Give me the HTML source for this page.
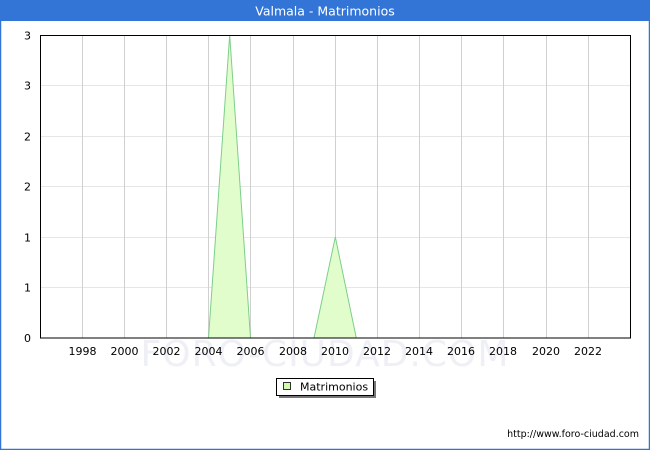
<!DOCTYPE html>
<html><head><meta charset="utf-8"><style>
html,body{margin:0;padding:0;background:#fff;}
svg{display:block;font-family:"DejaVu Sans","Liberation Sans",sans-serif;}
</style></head><body>
<svg width="650" height="450" viewBox="0 0 650 450" xmlns="http://www.w3.org/2000/svg">
<rect x="0" y="0" width="650" height="450" fill="#fff"/>
<rect x="0.5" y="0.5" width="649" height="449" fill="none" stroke="#3375d6" stroke-width="1.5"/>
<rect x="0" y="0" width="650" height="21" fill="#3375d6"/>
<text x="325" y="15.5" fill="#fff" font-size="12.5" text-anchor="middle">Valmala - Matrimonios</text>
<text x="325" y="366" fill="#eef0f6" font-size="36" text-anchor="middle" letter-spacing="1">FORO-CIUDAD.COM</text>
<g stroke="#d0d0d0" stroke-width="1">
<line x1="40" y1="85.5" x2="631" y2="85.5" stroke="#e6e6e6"/>
<line x1="40" y1="136.5" x2="631" y2="136.5" stroke="#e6e6e6"/>
<line x1="40" y1="186.5" x2="631" y2="186.5" stroke="#e6e6e6"/>
<line x1="40" y1="237.5" x2="631" y2="237.5" stroke="#e6e6e6"/>
<line x1="40" y1="287.5" x2="631" y2="287.5" stroke="#e6e6e6"/>
<line x1="82.5" y1="35" x2="82.5" y2="338"/>
<line x1="124.5" y1="35" x2="124.5" y2="338"/>
<line x1="166.5" y1="35" x2="166.5" y2="338"/>
<line x1="208.5" y1="35" x2="208.5" y2="338"/>
<line x1="250.5" y1="35" x2="250.5" y2="338"/>
<line x1="293.5" y1="35" x2="293.5" y2="338"/>
<line x1="335.5" y1="35" x2="335.5" y2="338"/>
<line x1="377.5" y1="35" x2="377.5" y2="338"/>
<line x1="419.5" y1="35" x2="419.5" y2="338"/>
<line x1="461.5" y1="35" x2="461.5" y2="338"/>
<line x1="503.5" y1="35" x2="503.5" y2="338"/>
<line x1="546.5" y1="35" x2="546.5" y2="338"/>
<line x1="588.5" y1="35" x2="588.5" y2="338"/>
</g>
<polygon points="208.5,338 229.7,35 250.5,338" fill="#e2fdcc" stroke="#7ccf8a" stroke-width="1"/>
<polygon points="314,338 335.3,237 356.3,338" fill="#e2fdcc" stroke="#7ccf8a" stroke-width="1"/>
<rect x="40.5" y="35.5" width="590" height="302.5" fill="none" stroke="#000" stroke-width="1"/>
<g font-size="11" fill="#000" text-anchor="end">
<text x="31" y="39.5">3</text>
<text x="31" y="89.5">3</text>
<text x="31" y="140.5">2</text>
<text x="31" y="190.5">2</text>
<text x="31" y="241.5">1</text>
<text x="31" y="291.5">1</text>
<text x="31" y="342">0</text>
</g>
<g font-size="11" fill="#000" text-anchor="middle">
<text x="82.5" y="355">1998</text><text x="124.5" y="355">2000</text><text x="166.5" y="355">2002</text>
<text x="208.5" y="355">2004</text><text x="250.5" y="355">2006</text><text x="293" y="355">2008</text>
<text x="335" y="355">2010</text><text x="377" y="355">2012</text><text x="419" y="355">2014</text>
<text x="461" y="355">2016</text><text x="503" y="355">2018</text><text x="546" y="355">2020</text>
<text x="588" y="355">2022</text>
</g>
<rect x="279" y="381" width="97" height="17" fill="#777"/>
<rect x="276.5" y="378.5" width="97" height="17" fill="#fff" stroke="#000" stroke-width="1"/>
<rect x="283.5" y="382.5" width="7" height="7" fill="#d2fbb0" stroke="#000" stroke-width="0.8"/>
<text x="300" y="390.5" font-size="11" fill="#000">Matrimonios</text>
<text x="639" y="437" font-size="9.5" fill="#000" text-anchor="end">http://www.foro-ciudad.com</text>
</svg>
</body></html>
